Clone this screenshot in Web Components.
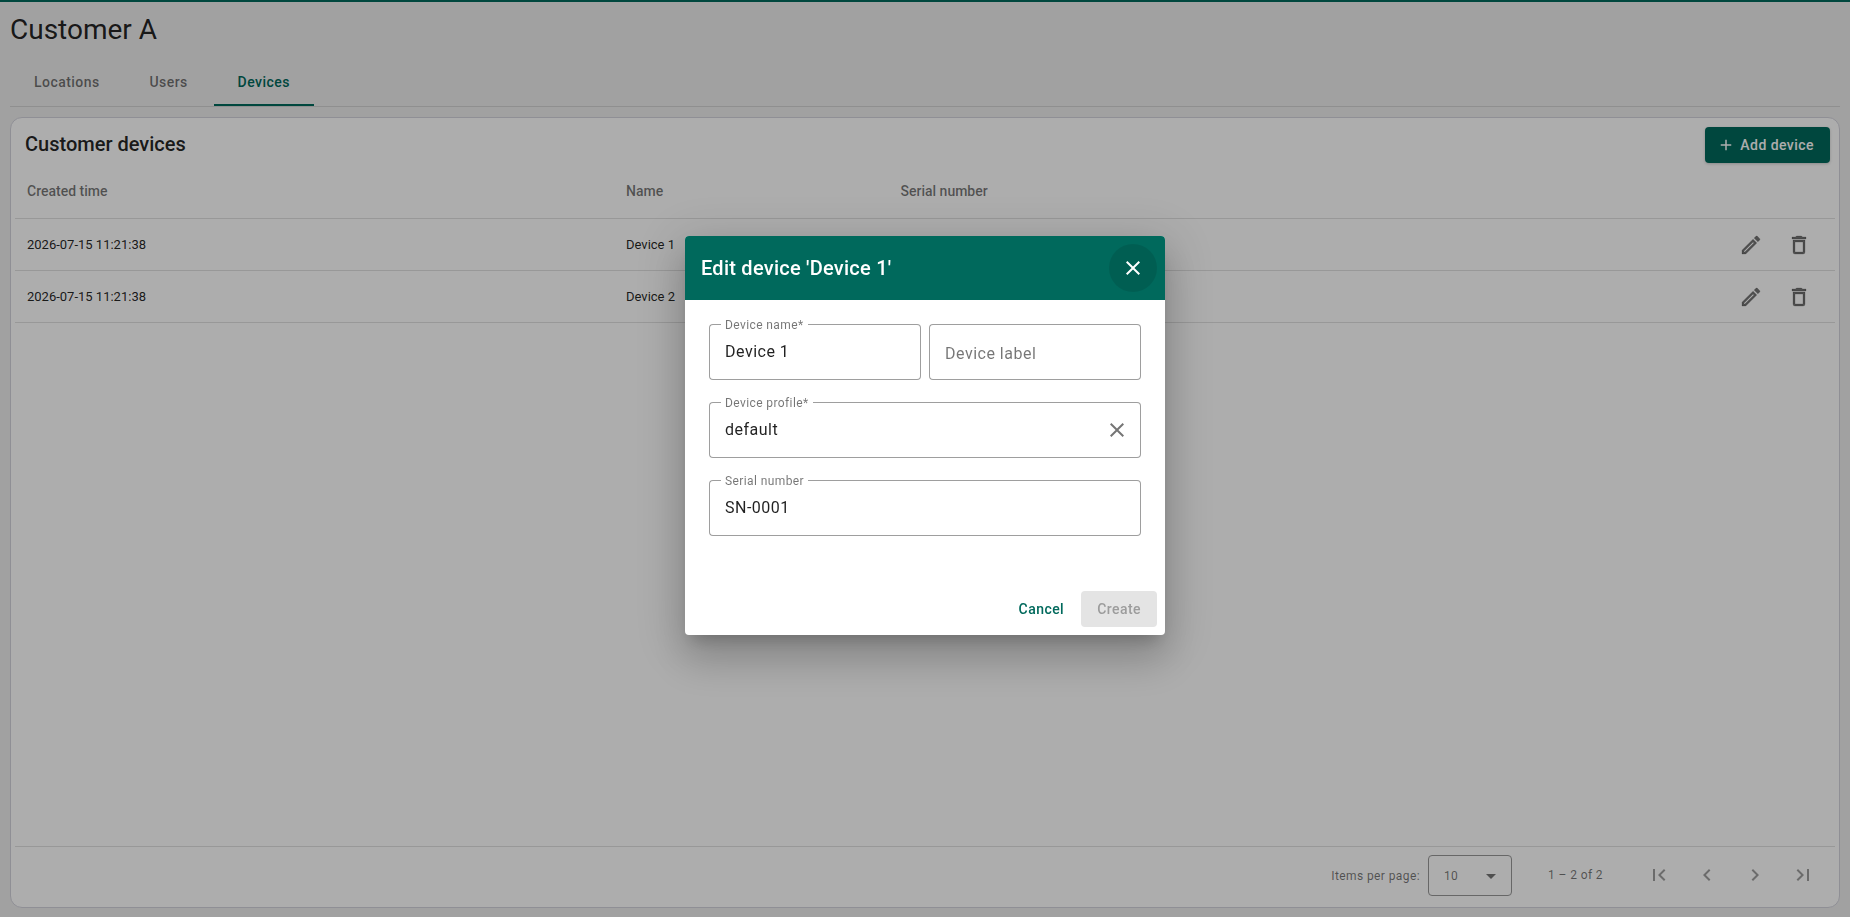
<!DOCTYPE html>
<html lang="en">
<head>
<meta charset="utf-8">
<title>Customer A</title>
<style>
  :root {
    --color-primary: #00695c;
    --color-text: rgba(0, 0, 0, 0.87);
    --color-muted: rgba(0, 0, 0, 0.54);
    --color-line: #e0e0e0;
    --font-sans: Roboto, "Liberation Sans", sans-serif;
  }

  body {
    margin: 0;
    height: 100vh;
    overflow: hidden;
    background: #eee;
    color: var(--color-text);
    font-family: var(--font-sans);
  }

  .form {
    display: grid;
    grid-template-columns: 1fr 1fr;
    gap: 22px 8px;
  }

  .form .wide { grid-column: 1 / 3; }
</style>
</head>
<body>
<customer-page heading="Customer A">
  <ui-tabs slot="tabs">
    <ui-tab>Locations</ui-tab>
    <ui-tab>Users</ui-tab>
    <ui-tab active>Devices</ui-tab>
  </ui-tabs>
  <device-table heading="Customer devices"></device-table>
</customer-page>

<ui-dialog heading="Edit device 'Device 1'">
  <div class="form">
    <form-field label="Device name*" value="Device 1"></form-field>
    <form-field label="Device label"></form-field>
    <form-field class="wide" label="Device profile*" value="default" clearable></form-field>
    <form-field class="wide" label="Serial number" value="SN-0001"></form-field>
  </div>
  <ui-button slot="actions" variant="text">Cancel</ui-button>
  <ui-button slot="actions" variant="disabled">Create</ui-button>
</ui-dialog>

<script>
const ICONS = {
  plus: 'M19,13H13V19H11V13H5V11H11V5H13V11H19V13Z',
  edit: 'M14.06,9L15,9.94L5.92,19H5V18.08L14.06,9M17.66,3C17.41,3 17.15,3.1 16.96,3.29L15.13,5.12L18.88,8.87L20.71,7.04C21.1,6.65 21.1,6 20.71,5.63L18.37,3.29C18.17,3.09 17.92,3 17.66,3M14.06,6.19L3,17.25V21H6.75L17.81,9.94L14.06,6.19Z',
  trash: 'M6,19A2,2 0 0,0 8,21H16A2,2 0 0,0 18,19V7H6V19M8,9H16V19H8V9M15.5,4L14.5,3H9.5L8.5,4H5V6H19V4H15.5Z',
  close: 'M19,6.41L17.59,5L12,10.59L6.41,5L5,6.41L10.59,12L5,17.59L6.41,19L12,13.41L17.59,19L19,17.59L13.41,12L19,6.41Z',
  first: 'M18.41 16.59L13.82 12l4.59-4.59L17 6l-6 6 6 6zM6 6h2v12H6z',
  prev: 'M15.41 7.41L14 6l-6 6 6 6 1.41-1.41L10.83 12z',
  next: 'M10 6L8.59 7.41 13.17 12l-4.58 4.59L10 18l6-6z',
  last: 'M5.59 7.41L10.18 12l-4.59 4.59L7 18l6-6-6-6zM16 6h2v12h-2z',
  arrow: 'M7,10L12,15L17,10H7Z',
};

// Base class: attaches an open root and fills it with the element's view
class BaseElement extends HTMLElement {
  connectedCallback() {
    if (!this.shadowRoot) this.attachShadow({ mode: 'open' });
    this.shadowRoot.innerHTML = this.view();
  }

  attr(name) {
    return this.getAttribute(name) || '';
  }
}

class UIIcon extends BaseElement {
  view() {
    const size = this.attr('size') || 24;
    return `
      <style>
        :host { display: block; flex: none; width: ${size}px; height: ${size}px; }
        svg { display: block; width: 100%; height: 100%; fill: currentColor; }
        :host([bold]) svg { stroke: currentColor; stroke-width: 0.3; }
      </style>
      <svg viewBox="0 0 24 24"><path d="${ICONS[this.attr('name')]}"/></svg>
    `;
  }
}

class UIButton extends BaseElement {
  view() {
    const variant = this.attr('variant') || 'primary';
    return `
      <style>
        :host { display: block; }

        button {
          display: flex;
          align-items: center;
          height: 36px;
          padding: 0 16px;
          border: 0;
          border-radius: 4px;
          font: 500 14px/36px var(--font-sans);
          letter-spacing: 0.45px;
          white-space: nowrap;
        }

        .primary {
          padding: 0 16px 0 12px;
          background: var(--color-primary);
          color: #fff;
          box-shadow: 0 1px 3px rgba(0, 0, 0, 0.2);
        }

        .text { background: none; color: var(--color-primary); }
        .disabled { background: #e4e4e4; color: #9c9c9c; }
      </style>
      <button class="${variant}"><slot></slot></button>
    `;
  }
}

class UITab extends BaseElement {
  view() {
    return `
      <style>
        :host {
          box-sizing: border-box;
          display: flex;
          justify-content: center;
          min-width: 90px;
          height: 48px;
          padding: 0 24px;
          border-bottom: 2px solid transparent;
          color: var(--color-muted);
          font: 500 14px/48px var(--font-sans);
          letter-spacing: 0.45px;
        }

        :host([active]) {
          color: var(--color-primary);
          border-color: var(--color-primary);
        }
      </style>
      <slot></slot>
    `;
  }
}

class UITabs extends BaseElement {
  view() {
    return `
      <style>
        :host { display: flex; border-bottom: 1px solid #d3d3d3; }
      </style>
      <slot></slot>
    `;
  }
}

class CustomerPage extends BaseElement {
  view() {
    return `
      <style>
        :host {
          box-sizing: border-box;
          display: flex;
          flex-direction: column;
          height: 100vh;
          padding: 0 10px 9px;
          border-top: 2px solid var(--color-primary);
        }

        h1 { margin: 0; height: 56px; font: 400 28px/56px var(--font-sans); }
        main { display: flex; flex: 1; min-height: 0; margin-top: 10px; }
      </style>
      <h1>${this.attr('heading')}</h1>
      <slot name="tabs"></slot>
      <main><slot></slot></main>
    `;
  }
}

class DeviceTable extends BaseElement {
  view() {
    const rows = [
      ['2026-07-15 11:21:38', 'Device 1'],
      ['2026-07-15 11:21:38', 'Device 2'],
    ];
    return `
      <style>
        :host {
          box-sizing: border-box;
          display: flex;
          flex: 1;
          flex-direction: column;
          padding: 0 4px;
          background: #fff;
          border: 1px solid #d3d3dc;
          border-radius: 12px;
        }

        header {
          display: flex;
          align-items: flex-start;
          justify-content: space-between;
          height: 45px;
          padding: 9px 5px 0 10px;
          box-sizing: border-box;
        }

        h2 { margin: 0; font: 500 20px/35px var(--font-sans); }
        ui-button ui-icon { margin-right: 5px; }

        .row {
          display: grid;
          grid-template-columns: 599px 274.5px 1fr auto;
          align-items: center;
          height: 51px;
          padding: 0 24px 0 12px;
          border-bottom: 1px solid var(--color-line);
          font-size: 13px;
        }

        .head {
          height: 55px;
          color: var(--color-muted);
          font-weight: 500;
          font-size: 14px;
        }

        .icons { display: flex; gap: 24px; color: var(--color-muted); }

        footer {
          box-sizing: border-box;
          display: flex;
          align-items: center;
          justify-content: flex-end;
          height: 61px;
          margin-top: auto;
          padding-bottom: 3px;
          border-top: 1px solid var(--color-line);
          color: var(--color-muted);
          font-size: 12px;
          letter-spacing: 0.4px;
        }

        .select {
          box-sizing: border-box;
          display: flex;
          align-items: center;
          justify-content: space-between;
          width: 84px;
          height: 41px;
          margin: 0 36px 0 8px;
          padding: 0 8px 0 15px;
          border: 1px solid #999;
          border-radius: 4px;
        }

        .range { margin-bottom: 2px; }
        .pages { display: flex; gap: 24px; margin: 0 20px 1px 44px; color: rgba(0, 0, 0, 0.38); }
      </style>
      <header>
        <h2>${this.attr('heading')}</h2>
        <ui-button><ui-icon name="plus" size="18"></ui-icon>Add device</ui-button>
      </header>
      <div class="row head"><span>Created time</span><span>Name</span><span>Serial number</span></div>
      ${rows.map(([time, name]) => `
        <div class="row">
          <span>${time}</span><span>${name}</span><span></span>
          <div class="icons"><ui-icon name="edit" bold></ui-icon><ui-icon name="trash" bold></ui-icon></div>
        </div>
      `).join('')}
      <footer>
        <span>Items per page:</span>
        <div class="select"><span>10</span><ui-icon name="arrow"></ui-icon></div>
        <span class="range">1 – 2 of 2</span>
        <div class="pages">
          <ui-icon name="first"></ui-icon>
          <ui-icon name="prev"></ui-icon>
          <ui-icon name="next"></ui-icon>
          <ui-icon name="last"></ui-icon>
        </div>
      </footer>
    `;
  }
}

// Outlined text field, the label sits in a notch of the border when filled
class FormField extends BaseElement {
  view() {
    const label = this.attr('label');
    const value = this.attr('value');
    return `
      <style>
        :host { display: flex; height: 56px; }

        .start, .notch, .rest {
          box-sizing: border-box;
          border: 1px solid #9e9e9e;
        }

        .start { width: 12px; border-right: 0; border-radius: 4px 0 0 4px; }
        .notch { width: 0; border-width: 0 0 1px; white-space: nowrap; }
        .notch.open { width: auto; padding: 0 4px; }

        .rest {
          display: flex;
          flex: 1;
          align-items: center;
          justify-content: flex-end;
          padding-right: 11px;
          border-left: 0;
          border-radius: 0 4px 4px 0;
          color: var(--color-muted);
        }

        label {
          display: block;
          margin-top: -7px;
          color: var(--color-muted);
          font-size: 12px;
          line-height: 16px;
          letter-spacing: 0.4px;
        }

        .value {
          width: 0;
          margin-top: 7px;
          font-size: 16px;
          line-height: 24px;
          letter-spacing: 0.5px;
        }

        .placeholder { margin: 18px 0 0 4px; color: var(--color-muted); }
      </style>
      <div class="start"></div>
      ${value
        ? `<div class="notch open"><label>${label}</label><div class="value">${value}</div></div>`
        : `<div class="notch"><div class="value placeholder">${label}</div></div>`}
      <div class="rest">${this.hasAttribute('clearable') ? '<ui-icon name="close"></ui-icon>' : ''}</div>
    `;
  }
}

class UIDialog extends BaseElement {
  view() {
    return `
      <style>
        :host {
          position: fixed;
          inset: 0;
          display: flex;
          align-items: center;
          justify-content: center;
          background: rgba(0, 0, 0, 0.32);
        }

        section {
          display: flex;
          flex-direction: column;
          width: 480px;
          height: 399px;
          margin-bottom: 46px;
          background: #fff;
          border-radius: 4px;
          overflow: hidden;
          will-change: transform;
          box-shadow: 0 11px 15px -7px rgba(0, 0, 0, 0.2), 0 24px 38px 3px rgba(0, 0, 0, 0.14), 0 9px 46px 8px rgba(0, 0, 0, 0.12);
        }

        header {
          display: flex;
          align-items: center;
          justify-content: space-between;
          height: 64px;
          padding: 0 8px 0 16px;
          background: var(--color-primary);
          color: #fff;
        }

        h2 { margin: 0; font: 500 20px/64px var(--font-sans); letter-spacing: 0.25px; }

        .close {
          display: grid;
          place-items: center;
          width: 48px;
          height: 48px;
          border-radius: 50%;
          background: rgba(0, 0, 0, 0.1);
        }

        .content { padding: 24px; }
        footer { display: flex; justify-content: flex-end; gap: 1px; margin-top: auto; padding: 8px; }
      </style>
      <section>
        <header>
          <h2>${this.attr('heading')}</h2>
          <div class="close"><ui-icon name="close"></ui-icon></div>
        </header>
        <div class="content"><slot></slot></div>
        <footer><slot name="actions"></slot></footer>
      </section>
    `;
  }
}

customElements.define('ui-icon', UIIcon);
customElements.define('ui-button', UIButton);
customElements.define('ui-tab', UITab);
customElements.define('ui-tabs', UITabs);
customElements.define('form-field', FormField);
customElements.define('device-table', DeviceTable);
customElements.define('customer-page', CustomerPage);
customElements.define('ui-dialog', UIDialog);
</script>
</body>
</html>
